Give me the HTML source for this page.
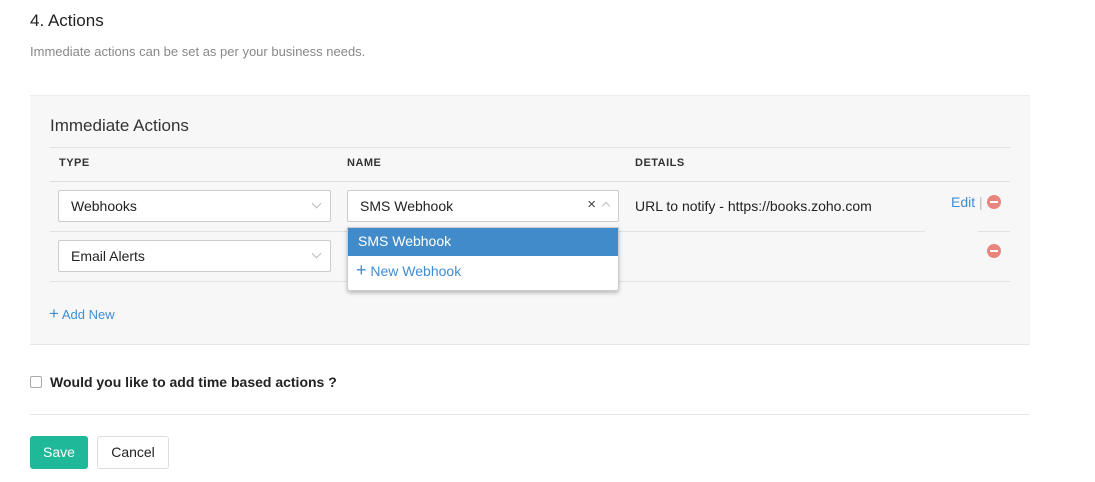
<!DOCTYPE html>
<html><head><style>
*{box-sizing:border-box;margin:0;padding:0}
body{width:1095px;height:482px;background:#fff;font-family:"Liberation Sans",sans-serif;color:#222;position:relative;overflow:hidden}
.a{position:absolute}
.sel{position:absolute;background:#fff;border:1px solid #ccc;border-radius:2px;height:32px;font-size:14px;padding:7px 12px;color:#222}
.chev{position:absolute;right:10px;top:9px;width:7px;height:7px;border-right:1px solid #bbb;border-bottom:1px solid #bbb;transform:rotate(45deg)}
.hline{position:absolute;height:1px;background:#e2e2e2}
.th{position:absolute;top:157px;font-size:11px;font-weight:bold;letter-spacing:.5px;color:#333}
.minus{position:absolute;width:14px;height:14px;border-radius:50%;background:#e8867d}
.minus:after{content:"";position:absolute;left:3px;top:6px;width:8px;height:2px;background:#fff}
</style></head><body>
<div class="a" style="left:30px;top:11px;font-size:17px;color:#222">4. Actions</div>
<div class="a" style="left:30px;top:44px;font-size:13px;color:#888">Immediate actions can be set as per your business needs.</div>
<div class="a" style="left:30px;top:95px;width:1000px;height:250px;background:#f7f7f7;border-top:1px solid #ececec;border-bottom:1px solid #e6e6e6"></div>
<div class="a" style="left:50px;top:116px;font-size:17px;color:#333">Immediate Actions</div>
<div class="hline" style="left:50px;top:147px;width:960px"></div>
<div class="th" style="left:59px">TYPE</div>
<div class="th" style="left:347px">NAME</div>
<div class="th" style="left:635px">DETAILS</div>
<div class="hline" style="left:50px;top:181px;width:960px;background:#ddd"></div>
<div class="hline" style="left:50px;top:231px;width:875px"></div>
<div class="hline" style="left:978px;top:231px;width:32px"></div>
<div class="hline" style="left:50px;top:281px;width:960px"></div>
<div class="sel" style="left:58px;top:190px;width:273px">Webhooks<span class="chev"></span></div>
<div class="sel" style="left:58px;top:240px;width:273px">Email Alerts<span class="chev"></span></div>
<div class="sel" style="left:347px;top:190px;width:272px">SMS Webhook<span class="a" style="right:22px;top:5px;font-size:15px;color:#444">×</span><span class="a" style="right:9px;top:12px;width:6px;height:6px;border-left:1px solid #bbb;border-top:1px solid #bbb;transform:rotate(45deg)"></span></div>
<div class="a" style="left:635px;top:198px;font-size:14px;color:#222">URL to notify - https://books.zoho.com</div>
<div class="a" style="left:951px;top:194px;font-size:14px;color:#408dd2">Edit <span style="color:#bbb">|</span></div>
<div class="minus" style="left:987px;top:195px"></div>
<div class="minus" style="left:987px;top:244px"></div>
<div class="a" style="left:347px;top:227px;width:272px;height:64px;background:#fff;border:1px solid #ccc;box-shadow:0 2px 4px rgba(0,0,0,.25);border-radius:0 0 3px 3px">
<div style="height:28px;background:#428bca;color:#fff;font-size:14px;padding:5px 10px">SMS Webhook</div>
<div style="color:#408dd2;font-size:14px;padding:7px 8px"><span style="font-size:18px;line-height:14px">+</span> New Webhook</div>
</div>
<div class="a" style="left:49px;top:304px;font-size:13px;color:#408dd2"><span style="font-size:17px">+</span> Add New</div>
<div class="a" style="left:30px;top:376px;width:12px;height:12px;border:1px solid #aaa;border-radius:2px;background:#fff"></div>
<div class="a" style="left:50px;top:374px;font-size:14px;font-weight:bold;color:#222">Would you like to add time based actions ?</div>
<div class="hline" style="left:30px;top:414px;width:1000px;background:#e6e6e6"></div>
<div class="a" style="left:30px;top:436px;width:58px;height:33px;background:#1fb899;border-radius:3px;color:#fff;font-size:14px;text-align:center;line-height:33px">Save</div>
<div class="a" style="left:97px;top:436px;width:72px;height:33px;background:#fff;border:1px solid #ddd;border-radius:3px;color:#222;font-size:14px;text-align:center;line-height:31px">Cancel</div>
</body></html>
